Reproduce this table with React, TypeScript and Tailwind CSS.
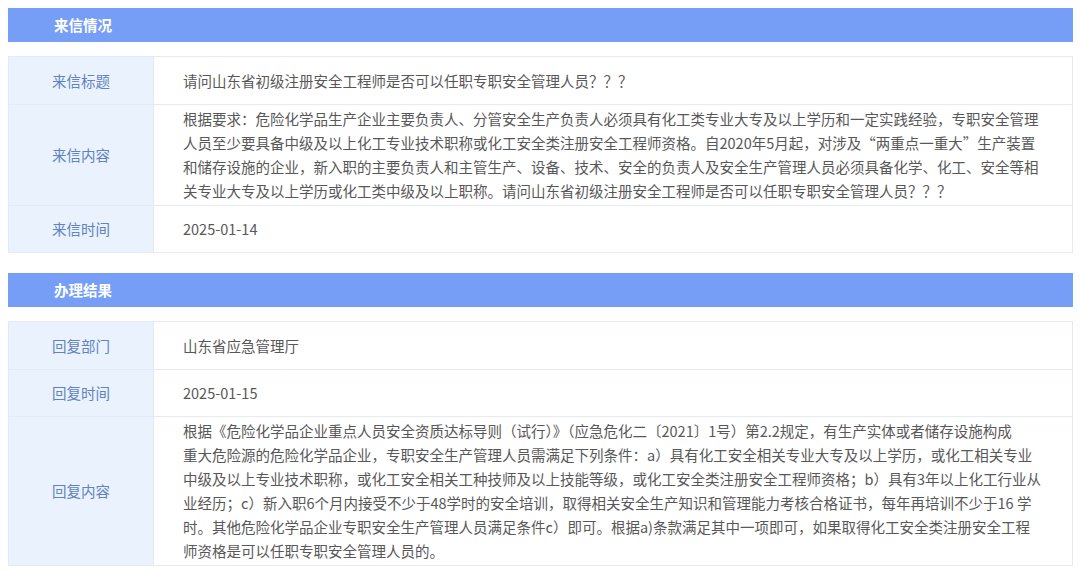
const font = { fontFamily: '"Noto Sans CJK SC", "Noto Sans", sans-serif' };

type Row = { label: string; lines: string[] };

const letterRows: Row[] = [
  { label: "来信标题", lines: ["请问山东省初级注册安全工程师是否可以任职专职安全管理人员？？？"] },
  {
    label: "来信内容",
    lines: [
      "根据要求：危险化学品生产企业主要负责人、分管安全生产负责人必须具有化工类专业大专及以上学历和一定实践经验，专职安全管理",
      "人员至少要具备中级及以上化工专业技术职称或化工安全类注册安全工程师资格。自2020年5月起，对涉及“两重点一重大”生产装置",
      "和储存设施的企业，新入职的主要负责人和主管生产、设备、技术、安全的负责人及安全生产管理人员必须具备化学、化工、安全等相",
      "关专业大专及以上学历或化工类中级及以上职称。请问山东省初级注册安全工程师是否可以任职专职安全管理人员？？？",
    ],
  },
  { label: "来信时间", lines: ["2025-01-14"] },
];

const resultRows: Row[] = [
  { label: "回复部门", lines: ["山东省应急管理厅"] },
  { label: "回复时间", lines: ["2025-01-15"] },
  {
    label: "回复内容",
    lines: [
      "根据《危险化学品企业重点人员安全资质达标导则（试行）》（应急危化二〔2021〕1号）第2.2规定，有生产实体或者储存设施构成",
      "重大危险源的危险化学品企业，专职安全生产管理人员需满足下列条件：a）具有化工安全相关专业大专及以上学历，或化工相关专业",
      "中级及以上专业技术职称，或化工安全相关工种技师及以上技能等级，或化工安全类注册安全工程师资格；b）具有3年以上化工行业从",
      "业经历；c）新入职6个月内接受不少于48学时的安全培训，取得相关安全生产知识和管理能力考核合格证书，每年再培训不少于16 学",
      "时。其他危险化学品企业专职安全生产管理人员满足条件c）即可。根据a)条款满足其中一项即可，如果取得化工安全类注册安全工程",
      "师资格是可以任职专职安全管理人员的。",
    ],
  },
];

function Section({ title, rows }: { title: string; rows: Row[] }) {
  return (
    <section>
      <div className="flex h-[34px] items-center bg-[#779ef7] pl-[46px] text-[14.5px] font-bold text-white">
        {title}
      </div>
      <div className="mt-[14px] border border-[#e3e9f6]">
        {rows.map((row, i) => (
          <div
            key={row.label}
            className={`flex min-h-[47px] ${i > 0 ? "border-t border-[#e3e9f6]" : ""}`}
          >
            <div className="flex w-[145px] shrink-0 items-center justify-center border-r border-[#e3e9f6] bg-[#e9f2fd] text-[14.5px] text-[#6283bf]">
              {row.label}
            </div>
            <div className="flex flex-1 flex-col justify-center py-[2px] pl-[29px] text-[14.5px] leading-6 text-[#585858]">
              {row.lines.map((line) => (
                <div key={line} className="whitespace-nowrap">
                  {line}
                </div>
              ))}
            </div>
          </div>
        ))}
      </div>
    </section>
  );
}

export default function App() {
  return (
    <main className="min-h-screen bg-white" style={font}>
      <div className="ml-2 mr-[7px] flex flex-col gap-5 pt-2">
        <Section title="来信情况" rows={letterRows} />
        <Section title="办理结果" rows={resultRows} />
      </div>
    </main>
  );
}
